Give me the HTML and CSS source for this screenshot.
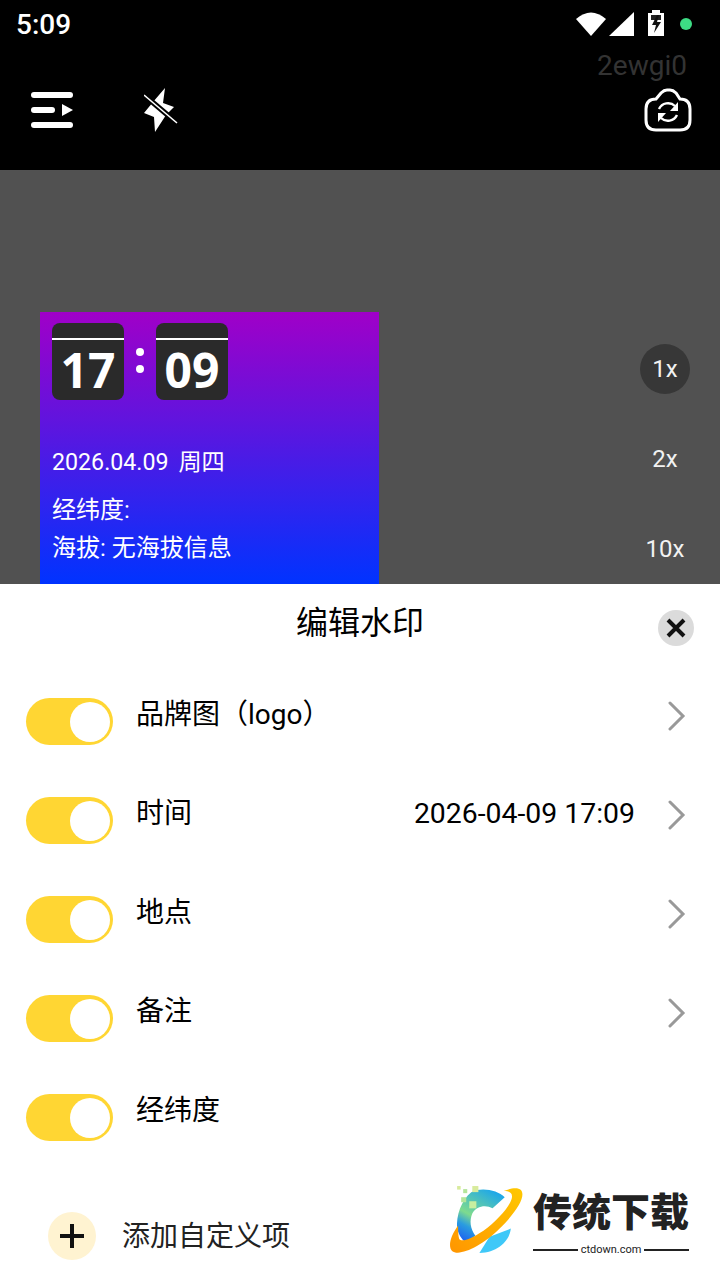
FILE: index.html
```html
<!DOCTYPE html>
<html lang="zh-CN">
<head>
    <meta charset="UTF-8">
    <meta name="viewport" content="width=device-width, initial-scale=1.0">
    <title>编辑水印</title>
    <link rel="stylesheet" href="styles.css">
</head>
<body>
    <div id="screen">
        <div class="top-area">
            <div class="status-bar">
                <div class="status-time">5:09</div>
                <div class="status-icons">
                    <svg width="116" height="28" viewBox="0 0 116 28">
                        <path d="M0 10Q15 -3 30 10L15 27Z" fill="#fff"/>
                        <path d="M33 27L58 3V27Z" fill="#fff"/>
                        <path d="M72 4H76V1H84V4H88V27H72Z" fill="#fff"/>
                        <path d="M75 6H85V11H75Z" fill="#222"/>
                        <path d="M81 6L76 16H80L78 24L85 13H81L83 6Z" fill="#111"/>
                        <circle cx="110" cy="15" r="6" fill="#3ddc84"/>
                    </svg>
                </div>
            </div>
            <div class="device-id">2ewgi0</div>
            <div class="tool-row">
                <svg class="menu-icon" width="44" height="38" viewBox="0 0 44 38">
                    <rect x="1" y="1" width="42" height="6" rx="3" fill="#fff"/>
                    <rect x="1" y="16" width="24" height="6" rx="3" fill="#fff"/>
                    <rect x="1" y="31" width="42" height="6" rx="3" fill="#fff"/>
                    <path d="M32 13L43 19L32 25Z" fill="#fff"/>
                </svg>
                <svg class="flash-icon" width="34" height="44" viewBox="144 88 34 44">
                    <path d="M165 88L163 103L174 107L166 115L155 132L154 117L144 113L153 102Z" fill="#fff"/>
                    <path d="M144 95L177 123" stroke="#000" stroke-width="5.500"/>
                    <path d="M144 95L177 123" stroke="#fff" stroke-width="1.600"/>
                </svg>
                <svg class="camera-icon" width="48" height="44" viewBox="0 0 48 44">
                    <path d="M12 11L17 5Q20 2 23 2H26Q29 2 32 5L36 11Q46 11 46 21V32Q46 42 36 42H12Q2 42 2 32V21Q2 11 12 11Z" fill="none" stroke="#fff" stroke-width="3"/>
                    <path d="M15 21A10 10 0 0 1 31 18" fill="none" stroke="#fff" stroke-width="2.400"/>
                    <path d="M33 27A10 10 0 0 1 17 30" fill="none" stroke="#fff" stroke-width="2.400"/>
                    <path d="M34 14V23H26Z" fill="#fff"/>
                    <path d="M14 34V25H22Z" fill="#fff"/>
                </svg>
            </div>
        </div>

        <div class="preview">
            <div class="watermark">
                <div class="clock">
                    <div class="flip-tile">17</div>
                    <div class="clock-dots"><span></span><span></span></div>
                    <div class="flip-tile">09</div>
                </div>
                <div class="wm-date">2026.04.09&nbsp; 周四</div>
                <div class="wm-line">经纬度:</div>
                <div class="wm-line">海拔: 无海拔信息</div>
            </div>
            <div class="zoom-rail">
                <div class="zoom-item zoom-active">1x</div>
                <div class="zoom-item">2x</div>
                <div class="zoom-item">10x</div>
            </div>
        </div>

        <div class="sheet">
            <div class="sheet-head">
                <div class="sheet-title">编辑水印</div>
                <div class="close-btn">
                    <svg width="22" height="22" viewBox="0 0 22 22"><path d="M3 3L19 19M19 3L3 19" stroke="#111" stroke-width="4"/></svg>
                </div>
            </div>

            <div class="option-list">
                <div class="option-row">
                    <div class="toggle"><div class="knob"></div></div>
                    <div class="option-name">品牌图（logo）</div>
                    <svg class="chevron" width="18" height="30" viewBox="0 0 18 30"><path d="M2 2L15 15L2 28" fill="none" stroke="#999" stroke-width="3" stroke-linecap="round"/></svg>
                </div>
                <div class="option-row">
                    <div class="toggle"><div class="knob"></div></div>
                    <div class="option-name">时间</div>
                    <div class="option-value">2026-04-09 17:09</div>
                    <svg class="chevron" width="18" height="30" viewBox="0 0 18 30"><path d="M2 2L15 15L2 28" fill="none" stroke="#999" stroke-width="3" stroke-linecap="round"/></svg>
                </div>
                <div class="option-row">
                    <div class="toggle"><div class="knob"></div></div>
                    <div class="option-name">地点</div>
                    <svg class="chevron" width="18" height="30" viewBox="0 0 18 30"><path d="M2 2L15 15L2 28" fill="none" stroke="#999" stroke-width="3" stroke-linecap="round"/></svg>
                </div>
                <div class="option-row">
                    <div class="toggle"><div class="knob"></div></div>
                    <div class="option-name">备注</div>
                    <svg class="chevron" width="18" height="30" viewBox="0 0 18 30"><path d="M2 2L15 15L2 28" fill="none" stroke="#999" stroke-width="3" stroke-linecap="round"/></svg>
                </div>
                <div class="option-row">
                    <div class="toggle"><div class="knob"></div></div>
                    <div class="option-name">经纬度</div>
                </div>
            </div>

            <div class="add-row">
                <div class="add-btn">
                    <svg width="26" height="26" viewBox="0 0 26 26"><path d="M1 13H25M13 1V25" stroke="#111" stroke-width="4"/></svg>
                </div>
                <div class="add-text">添加自定义项</div>
            </div>

            <div class="site-logo">
                <svg class="site-mark" width="77" height="73" viewBox="20 14 76 72">
                    <defs>
                        <linearGradient id="ringFill" x1="0" y1="1" x2="1" y2="0">
                            <stop offset="0" stop-color="#ff9500"/>
                            <stop offset="1" stop-color="#ffc800"/>
                        </linearGradient>
                        <linearGradient id="cFill" x1="0.7" y1="0" x2="0.2" y2="1">
                            <stop offset="0" stop-color="#1fa8e8"/>
                            <stop offset="0.55" stop-color="#7edb8e"/>
                            <stop offset="0.75" stop-color="#2a9ce0"/>
                            <stop offset="1" stop-color="#1e62f0"/>
                        </linearGradient>
                    </defs>
                    <path d="M75 27C68 20 52 17 42 22C32 30 27 45 28 58C30 66 34 70 37 72L46 65C41 58 40 50 43 43C47 36 56 34 63 38Z" fill="url(#cFill)"/>
                    <path d="M81 58C80 70 68 82 50 82L60 66Z" fill="#3fc8f8"/>
                    <path d="M29 55C21 66 19 76 23 80C30 86 52 76 70 58C88 40 96 26 91 20C88 17 81 18 74 21C80 21 83 23 82 28C80 36 68 50 54 60C42 68 32 72 30 68C29 65 29 60 29 55Z" fill="url(#ringFill)"/>
                    <rect x="28" y="16" width="3.500" height="3.500" fill="#d8eb9c"/>
                    <rect x="34" y="19" width="4" height="4" fill="#b4e59a"/>
                    <rect x="43" y="16" width="6" height="6" fill="#d8eb9c"/>
                    <rect x="32" y="27" width="5" height="5" fill="#b4e59a"/>
                    <rect x="40" y="31" width="7" height="7" fill="#c8efa0"/>
                </svg>
                <div class="site-words">
                    <div class="site-name">传统下载</div>
                    <div class="site-url"><span class="url-rule"></span><span>ctdown.com</span><span class="url-rule"></span></div>
                </div>
            </div>
        </div>
    </div>
</body>
</html>
```

FILE: styles.css
```css
* {
    box-sizing: border-box;
}

body {
    margin: 0;
    font-family: Roboto, "Noto Sans CJK SC", sans-serif;
    background: #fff;
}

#screen {
    width: 720px;
    height: 1280px;
    overflow: hidden;
    display: flex;
    flex-direction: column;
}

.top-area {
    height: 170px;
    background: #000;
    color: #fff;
}

.status-bar {
    height: 50px;
    display: flex;
    justify-content: space-between;
    align-items: flex-start;
    padding-left: 16px;
    padding-right: 28px;
    padding-top: 9px;
}

.status-time {
    font-size: 28px;
    font-weight: 500;
    line-height: 32px;
}

.status-icons {
    height: 28px;
}

.device-id {
    height: 32px;
    text-align: right;
    padding-right: 33px;
    font-size: 28px;
    line-height: 32px;
    color: #333;
}

.tool-row {
    display: flex;
    align-items: center;
    padding-left: 30px;
    padding-right: 28px;
    margin-top: 6px;
    height: 44px;
}

.flash-icon {
    margin-left: 70px;
}

.camera-icon {
    margin-left: auto;
}

.preview {
    height: 414px;
    background: #515151;
    display: flex;
    justify-content: space-between;
    align-items: flex-start;
    padding-left: 40px;
    padding-right: 30px;
}

.watermark {
    width: 339px;
    height: 272px;
    margin-top: 142px;
    padding: 11px 12px 0;
    color: #fff;
    background: linear-gradient(180deg, #a000c8, #0033ff);
}

.clock {
    display: flex;
    align-items: flex-start;
}

.flip-tile {
    position: relative;
    width: 72px;
    height: 77px;
    padding-top: 17px;
    border-radius: 8px;
    background: #2a2a2a;
    text-align: center;
    font-family: "Noto Sans", sans-serif;
    font-size: 48px;
    font-weight: 700;
    line-height: 60px;
}

.flip-tile::before {
    content: "";
    position: absolute;
    left: 0;
    right: 0;
    top: 15px;
    height: 2px;
    background: #fff;
}

.clock-dots {
    width: 32px;
    padding-top: 25px;
    display: flex;
    flex-direction: column;
    align-items: center;
    gap: 9px;
}

.clock-dots span {
    width: 8px;
    height: 8px;
    border-radius: 50%;
    background: #fff;
}

.wm-date {
    margin-top: 46px;
    font-size: 23.200px;
    line-height: 32px;
    word-spacing: -0.800px;
}

.wm-line {
    font-size: 24px;
    line-height: 38px;
}

.wm-date + .wm-line {
    margin-top: 13px;
}

.zoom-rail {
    margin-top: 174px;
    display: flex;
    flex-direction: column;
    gap: 40px;
}

.zoom-item {
    width: 50px;
    height: 50px;
    border-radius: 50%;
    display: flex;
    align-items: center;
    justify-content: center;
    font-size: 24px;
    color: #f2f2f2;
    white-space: nowrap;
}

.zoom-active {
    background: #373737;
}

.sheet {
    position: relative;
    flex: 1;
    background: #fff;
    color: #000;
}

.sheet-head {
    position: relative;
    height: 114px;
    text-align: center;
}

.sheet-title {
    padding-top: 18px;
    font-size: 32px;
    line-height: 42px;
}

.close-btn {
    position: absolute;
    top: 26px;
    right: 26px;
    width: 36px;
    height: 36px;
    border-radius: 50%;
    background: #dbdbdb;
    display: flex;
    align-items: center;
    justify-content: center;
}

.option-list {
    display: flex;
    flex-direction: column;
    gap: 52px;
}

.option-row {
    height: 47px;
    display: flex;
    align-items: flex-start;
    padding-left: 26px;
    padding-right: 34px;
}

.toggle {
    width: 87px;
    height: 47px;
    border-radius: 24px;
    background: #ffd633;
    display: flex;
    justify-content: flex-end;
    align-items: center;
    padding-right: 3px;
    flex-shrink: 0;
}

.knob {
    width: 40px;
    height: 40px;
    border-radius: 50%;
    background: #fff;
}

.option-name {
    margin-left: 23px;
    font-size: 28px;
    line-height: 34px;
}

.option-value {
    margin-left: auto;
    font-size: 28.400px;
    line-height: 34px;
}

.chevron {
    margin-top: 3px;
    margin-left: 33px;
}

.option-name + .chevron {
    margin-left: auto;
}

.add-row {
    display: flex;
    align-items: center;
    gap: 26px;
    margin-top: 71px;
    padding-left: 48px;
}

.add-btn {
    width: 48px;
    height: 48px;
    border-radius: 50%;
    background: #fff3d1;
    display: flex;
    align-items: center;
    justify-content: center;
}

.add-text {
    padding-top: 2px;
    font-size: 28px;
    line-height: 46px;
    color: #222;
}

.site-logo {
    position: absolute;
    left: 449px;
    top: 600px;
    display: flex;
    align-items: flex-start;
    gap: 7px;
}

.site-words {
    width: 156px;
    color: #222;
}

.site-name {
    font-family: "Noto Sans CJK SC", sans-serif;
    font-size: 39px;
    font-weight: 900;
    line-height: 50px;
    white-space: nowrap;
}

.site-url {
    display: flex;
    align-items: center;
    gap: 3px;
    margin-top: 9px;
    font-size: 11px;
    line-height: 14px;
}

.url-rule {
    flex: 1;
    height: 2px;
    background: #222;
}
```
